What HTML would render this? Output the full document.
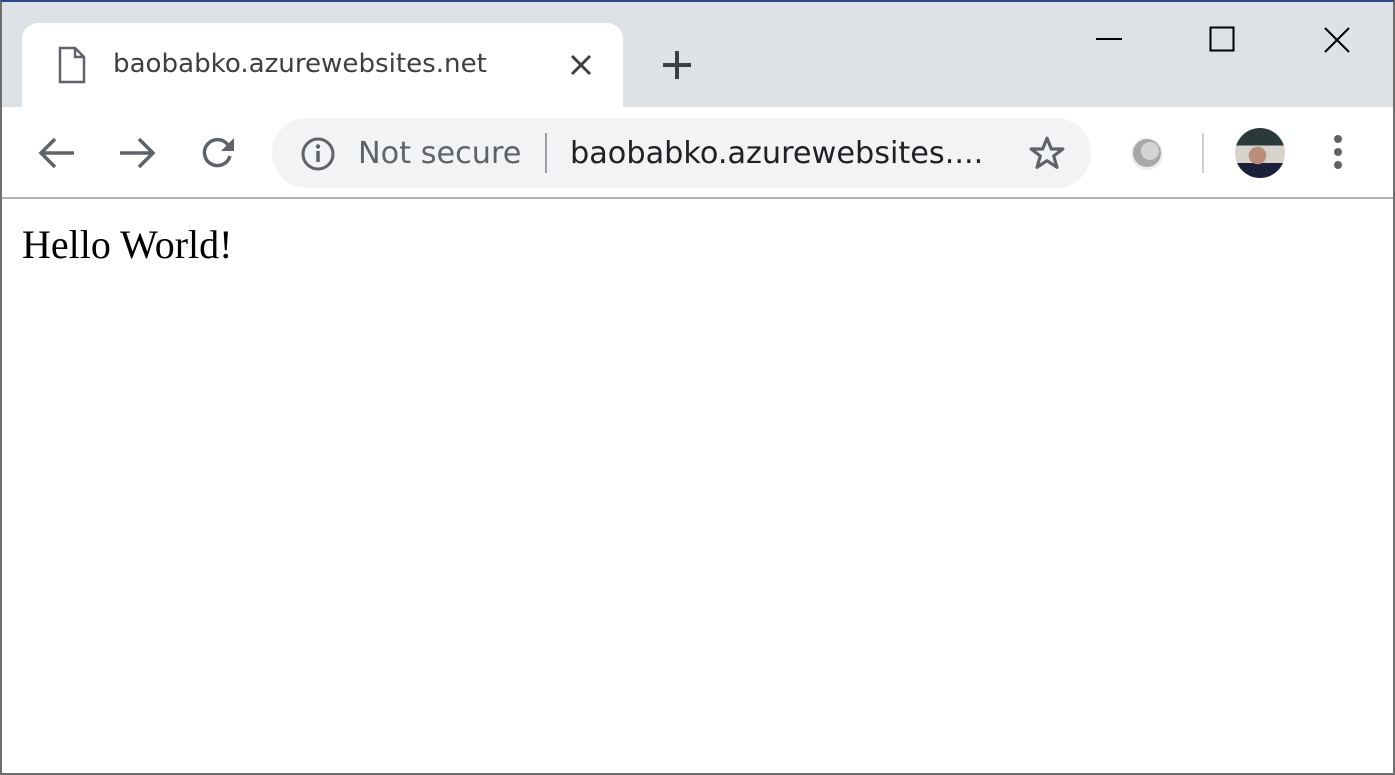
<!DOCTYPE html>
<html><head><meta charset="utf-8"><style>
*{margin:0;padding:0;box-sizing:border-box}
body{width:1395px;height:775px;overflow:hidden;background:#fff;position:relative;font-family:"Liberation Sans",sans-serif}
.frame{position:absolute;inset:0;border:2px solid #6e6e6e;border-top:2px solid #2c4a7f;pointer-events:none;z-index:10}
.strip{position:absolute;left:0;top:0;width:1395px;height:107px;background:#dee1e6}
.tab{position:absolute;left:22px;top:23px;width:601px;height:84px;background:#fff;border-radius:16px 16px 0 0}
.tabtitle{position:absolute;left:113px;top:49px;color:#3c4043;font-family:"DejaVu Sans","Liberation Sans",sans-serif;font-size:26.1px}
.toolbar{position:absolute;left:0;top:107px;width:1395px;height:92px;background:#fff;border-bottom:2px solid #b5b5b5}
.omni{position:absolute;left:272px;top:118px;width:819px;height:70px;background:#f1f3f4;border-radius:35px}
.t{position:absolute;font-family:"DejaVu Sans","Liberation Sans",sans-serif;font-size:30.3px;white-space:nowrap}
.hello{position:absolute;left:22px;top:221px;font-family:"Liberation Serif",serif;font-size:40px;color:#000}
svg{position:absolute}
</style></head><body>
<div class="strip"></div>
<div class="tab"></div>
<svg style="left:58px;top:46px" width="28" height="38" viewBox="0 0 28 38"><path d="M2 2H17L26 11V36H2Z M17 2V11H26" fill="none" stroke="#5f6368" stroke-width="2.5"/></svg>
<div class="tabtitle">baobabko.azurewebsites.net</div>
<svg style="left:568px;top:52px" width="26" height="26"><path d="M4 4L22 22M22 4L4 22" stroke="#3c4043" stroke-width="3"/></svg>
<svg style="left:660px;top:48px" width="34" height="34"><path d="M17 3V31M3 17H31" stroke="#3c4043" stroke-width="4"/></svg>
<svg style="left:1094px;top:30px" width="30" height="20"><path d="M2 9H28" stroke="#000" stroke-width="2"/></svg>
<svg style="left:1209px;top:26px" width="26" height="26"><rect x="1.5" y="1.5" width="23" height="23" fill="none" stroke="#000" stroke-width="2"/></svg>
<svg style="left:1323px;top:26px" width="28" height="28"><path d="M2 2L26 26M26 2L2 26" stroke="#000" stroke-width="2"/></svg>
<div class="toolbar"></div>
<svg style="left:38px;top:136px" width="38" height="34"><path d="M36 17H4M17 3L3 17L17 31" fill="none" stroke="#5f6368" stroke-width="3.5"/></svg>
<svg style="left:118px;top:136px" width="38" height="34"><path d="M2 17H34M21 3L35 17L21 31" fill="none" stroke="#5f6368" stroke-width="3.5"/></svg>
<svg style="left:198px;top:134px" width="40" height="38"><path d="M30 11A13 13 0 1 0 32 22" fill="none" stroke="#5f6368" stroke-width="3.5"/><path d="M36 4V17H23Z" fill="#5f6368"/></svg>
<div class="omni"></div>
<svg style="left:300px;top:136px" width="36" height="36"><circle cx="18" cy="18" r="15" fill="none" stroke="#5f6368" stroke-width="3"/><path d="M18 15V26" stroke="#5f6368" stroke-width="3.5"/><circle cx="18" cy="10.5" r="2.2" fill="#5f6368"/></svg>
<div class="t" style="left:358px;top:136px;color:#5f6368">Not secure</div>
<div style="position:absolute;left:545px;top:133px;width:2px;height:40px;background:#9aa0a6"></div>
<div class="t" style="left:570px;top:136px;color:#202124">baobabko.azurewebsites....</div>
<svg style="left:1027px;top:134px" width="40" height="40" viewBox="0 0 24 24"><path d="M12 2.5L14.6 9H21.5L16 13.2L18 20L12 16L6 20L8 13.2L2.5 9H9.4Z" fill="none" stroke="#5f6368" stroke-width="1.9" stroke-linejoin="round"/></svg>
<svg style="left:1128px;top:134px" width="40" height="40"><circle cx="19" cy="20" r="16" fill="#eee"/><circle cx="19" cy="19" r="14" fill="#a8a8a8"/><circle cx="22" cy="17" r="9" fill="#d4d4d4"/></svg>
<div style="position:absolute;left:1202px;top:133px;width:2px;height:40px;background:#d0d0d0"></div>
<div style="position:absolute;left:1235px;top:128px;width:50px;height:50px;border-radius:50%;background:radial-gradient(ellipse at 45% 55%,#b98d78 0 22%,transparent 23%),linear-gradient(#2a3a3a 0 35%,#d8d2cc 35% 70%,#1a1f3a 70%);overflow:hidden"></div>
<svg style="left:1328px;top:134px" width="20" height="40"><circle cx="10" cy="5" r="4" fill="#5f6368"/><circle cx="10" cy="18" r="4" fill="#5f6368"/><circle cx="10" cy="31" r="4" fill="#5f6368"/></svg>
<div class="hello">Hello World!</div>
<div class="frame"></div>
</body></html>
